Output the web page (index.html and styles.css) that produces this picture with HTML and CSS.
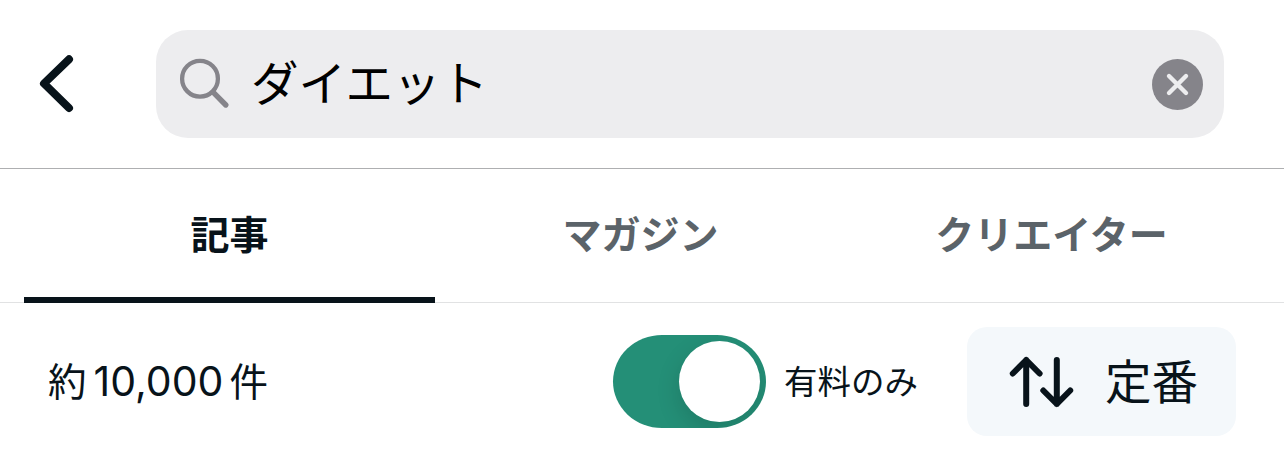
FILE: index.html
```
<!doctype html>
<html lang="ja">
<head>
<meta charset="utf-8">
<title>ダイエット</title>
<link rel="stylesheet" href="styles.css">
</head>
<body>
<header class="header">
    <button class="back" type="button" aria-label="戻る">
        <svg width="40" height="64" viewBox="0 0 40 64">
            <path d="M33 7.3L8 31.5L33 56"/>
        </svg>
    </button>
    <div class="search">
        <svg class="search-icon" width="54" height="54" viewBox="0 0 54 54">
            <circle cx="22" cy="21.7" r="17.9"/>
            <path d="M35.3 35.3L47.8 48"/>
        </svg>
        <span class="search-text">ダイエット</span>
        <svg class="clear" width="51" height="51" viewBox="0 0 51 51">
            <circle cx="25.5" cy="25.5" r="25.5"/>
            <path d="M17 17L34 34M34 17L17 34"/>
        </svg>
    </div>
</header>
<nav class="tabs">
    <a class="tab active">記事</a>
    <a class="tab">マガジン</a>
    <a class="tab">クリエイター</a>
</nav>
<div class="filter">
    <p class="count">約<span class="number">10,000</span>件</p>
    <div class="paid">
        <span class="switch"><span class="knob"></span></span>
        <span class="paid-label">有料のみ</span>
    </div>
    <button class="sort" type="button">
        <svg width="66" height="54" viewBox="0 0 66 54">
            <path d="M4.8 19.5L18.2 6L31.6 19.5M18.2 6V50M35.3 36.5L48.8 50L62.2 36.5M48.8 50V6"/>
        </svg>
        <span class="sort-label">定番</span>
    </button>
</div>
</body>
</html>
```

FILE: styles.css
```
* {
	box-sizing: border-box;
}
body {
	margin: 0;
	background: #fff;
	color: #08131a;
	font-family: "Noto Sans CJK JP", sans-serif;
	line-height: 1;
}
button {
	border: 0;
	padding: 0;
	background: none;
	color: inherit;
	font: inherit;
}
svg {
	display: block;
	flex: none;
	fill: none;
	stroke-linecap: round;
	stroke-linejoin: round;
}
.header {
	display: flex;
	align-items: center;
	height: 169px;
	padding: 0 60px 0 36px;
	border-bottom: 1px solid #aeafb1;
}
.back {
	width: 120px;
}
.back path {
	stroke: #08131a;
	stroke-width: 8;
}
.search {
	display: flex;
	align-items: center;
	flex: 1;
	height: 108px;
	padding: 0 21px 0 22px;
	border-radius: 32px;
	background: #ededef;
}
.search-icon circle {
	stroke: #85848a;
	stroke-width: 4.3;
}
.search-icon path {
	stroke: #85848a;
	stroke-width: 5.4;
}
.search-text {
	flex: 1;
	margin-left: 19px;
	padding-bottom: 7px;
	color: #000;
	font-size: 47.5px;
}
.clear circle {
	fill: #85848a;
}
.clear path {
	stroke: #ededef;
	stroke-width: 4.4;
}
.tabs {
	display: flex;
	height: 134px;
	padding: 0 24px;
	border-bottom: 1px solid #e1e2e3;
}
.tab {
	display: flex;
	align-items: center;
	justify-content: center;
	width: 411px;
	height: 134px;
	padding-bottom: 2px;
	color: #5b6369;
	font-size: 39px;
	font-weight: bold;
	border-bottom: 6px solid transparent;
}
.active {
	color: #08131a;
	border-bottom-color: #08131a;
}
.filter {
	display: flex;
	align-items: center;
	height: 153px;
	padding: 3px 48px 0;
}
.count {
	width: 565px;
	margin: 0;
	padding-bottom: 1px;
	font-size: 38.5px;
}
.number {
	margin: 0 6px 0 7px;
	font-family: Inter, sans-serif;
	font-size: 41px;
}
.paid {
	display: flex;
	align-items: center;
	flex: 1;
}
.switch {
	display: flex;
	justify-content: flex-end;
	width: 153px;
	height: 93px;
	padding: 6px;
	border-radius: 49px / 46.5px;
	background: #248f77;
	overflow: hidden;
}
.knob {
	width: 81px;
	height: 81px;
	border-radius: 50%;
	background: #fff;
	box-shadow: 0 9px 24px rgba(0, 0, 0, .14);
}
.paid-label {
	margin-left: 18px;
	padding-bottom: 2px;
	font-size: 33.5px;
}
.sort {
	display: flex;
	align-items: center;
	width: 269px;
	height: 109px;
	padding-left: 41px;
	border-radius: 20px;
	background: #f4f8fb;
}
.sort path {
	stroke: #08131a;
	stroke-width: 6;
}
.sort-label {
	margin-left: 31px;
	padding-bottom: 3px;
	font-size: 46.5px;
}
```
